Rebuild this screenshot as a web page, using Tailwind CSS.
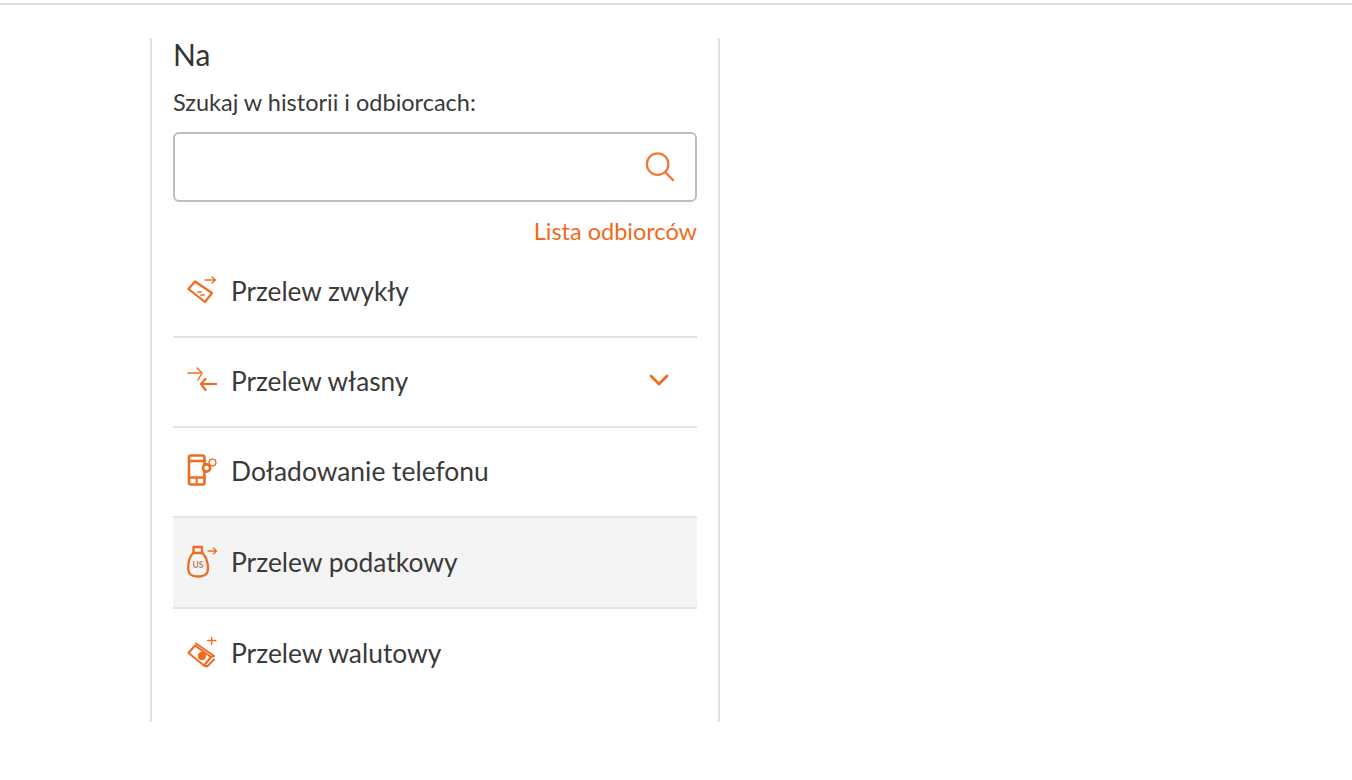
<!DOCTYPE html>
<html lang="pl">
<head>
    <meta charset="UTF-8">
    <title>Przelew</title>
    <script src="https://cdn.jsdelivr.net/npm/@tailwindcss/browser@4"></script>
</head>
<body class="bg-white h-[780px] overflow-hidden font-['Lato',sans-serif] text-[#3a3a3a]">
    <div class="h-[2px] mt-[3px] bg-[#dcdcdc]"></div>

    <div class="ml-[150px] mt-[33px] w-[570px] h-[684px] border-x-2 border-[#e2e2e2] px-[21px]">
        <!-- naglowek -->
        <h2 class="text-[30px] leading-[33px] text-[#333]">Na</h2>
        <p class="mt-[17px] text-[23.5px] leading-[28px]">Szukaj w historii i odbiorcach:</p>

        <!-- wyszukiwarka -->
        <div class="mt-[16px] h-[70px] border-2 border-[#bdbdbd] rounded-[6px] flex items-center justify-end pr-[20px]">
            <svg class="w-[30px] h-[30px]" viewBox="0 0 32 32" fill="none" stroke="#f0793a" stroke-width="2.4" stroke-linecap="round">
                <circle cx="13.5" cy="13" r="11.5"/>
                <path d="M21.5 21.5 L30 30"/>
            </svg>
        </div>
        <div class="mt-[14px] text-right text-[23.5px] leading-[30px] text-[#ee6c22]">Lista odbiorców</div>

        <!-- lista -->
        <div class="mt-[1px]">
            <div class="h-[91px] border-b-2 border-[#e4e4e4] flex items-center pl-[14px] pb-[2px]">
                <svg class="w-[30px] h-[30px] shrink-0" viewBox="0 0 30 30" fill="none" stroke="#ee6c22" stroke-width="2.2" stroke-linecap="round" stroke-linejoin="round">
                    <path d="M1.5 13 L8 5.5 L25 17 L18 26 Z"/>
                    <path d="M11 16 h3 M14 19 h3" stroke-width="1.7"/>
                    <path d="M18 4 H28.5 M25 1 L28.5 4 L25 7" stroke-width="1.3"/>
                </svg>
                <span class="ml-[14px] text-[26.2px] leading-[34px]">Przelew zwykły</span>
            </div>
            <div class="h-[90px] border-b-2 border-[#e4e4e4] flex items-center pl-[14px] pr-[28px] pb-[2px]">
                <svg class="w-[30px] h-[30px] shrink-0" viewBox="0 0 30 30" fill="none" stroke="#ee6c22" stroke-width="1.5" stroke-linecap="round" stroke-linejoin="round">
                    <path d="M1 7 H13 M10 2 L15 7 L11 14"/>
                    <path d="M29.5 18 H15 M18.5 13 L14 18 L18.5 24" stroke-width="2.2"/>
                </svg>
                <span class="ml-[14px] text-[26.2px] leading-[34px]">Przelew własny</span>
                <svg class="ml-auto w-[20px] h-[14px] -mt-[2px]" viewBox="0 0 20 14" fill="none" stroke="#ee6c22" stroke-width="2.8" stroke-linecap="round" stroke-linejoin="round">
                    <path d="M2 3 L10 11 L18 3"/>
                </svg>
            </div>
            <div class="h-[90px] border-b-2 border-[#e4e4e4] flex items-center pl-[14px] pb-[2px]">
                <svg class="w-[30px] h-[34px] shrink-0" viewBox="0 0 30 34" fill="none" stroke="#ee6c22" stroke-width="2.6" stroke-linecap="round" stroke-linejoin="round">
                    <rect x="2" y="1.5" width="15.5" height="29" rx="2"/>
                    <path d="M2 7 H17.5 M2 23.5 H17.5"/>
                    <path d="M9.7 23.5 V30.5" stroke-width="2"/>
                    <circle cx="19.5" cy="14" r="3.6" fill="#fff"/>
                    <circle cx="25.5" cy="8.5" r="3.4" fill="#fff" stroke-width="1.4"/>
                </svg>
                <span class="ml-[14px] text-[26.4px] leading-[34px]">Doładowanie telefonu</span>
            </div>
            <div class="h-[91px] bg-[#f4f4f4] border-b-2 border-[#e4e4e4] flex items-center pl-[14px] pb-[2px]">
                <svg class="w-[30px] h-[34px] shrink-0" viewBox="0 0 30 34" fill="none" stroke="#ee6c22" stroke-width="2.3" stroke-linecap="round" stroke-linejoin="round">
                    <path d="M6.5 2 H15 V8 H6.5 Z"/>
                    <path d="M6 8 C2.5 12 1.2 17 1.2 23 C1.2 29.5 4.5 31.5 11 31.5 C17.5 31.5 21 29.5 21 23 C21 17 19 12 15.5 8"/>
                    <path d="M21 6 H29.5 M26.5 3 L29.5 6 L26.5 9" stroke-width="1.3"/>
                    <text x="11" y="23" text-anchor="middle" font-size="8.5" font-weight="900" fill="#b98a70" stroke="none" font-family="Lato, sans-serif">US</text>
                </svg>
                <span class="ml-[14px] text-[26.4px] leading-[34px]">Przelew podatkowy</span>
            </div>
            <div class="h-[90px] flex items-center pl-[14px] pb-[2px]">
                <svg class="w-[30px] h-[32px] shrink-0" viewBox="0 0 30 32" fill="none" stroke="#ee6c22" stroke-width="2.1" stroke-linecap="round" stroke-linejoin="round">
                    <path d="M1.5 16 L8 8.5 L24 20 L17 28.5 Z"/>
                    <path d="M9 6.5 L27 19 L24 20 M17 28.5 L20 29.5 L27 22.5"/>
                    <circle cx="15" cy="19" r="4.2" fill="#ee6c22" stroke="none"/>
                    <path d="M20.5 3.5 H29 M24.7 0 V7.5" stroke-width="1.3"/>
                </svg>
                <span class="ml-[14px] text-[26.4px] leading-[34px]">Przelew walutowy</span>
            </div>
        </div>
    </div>
</body>
</html>
